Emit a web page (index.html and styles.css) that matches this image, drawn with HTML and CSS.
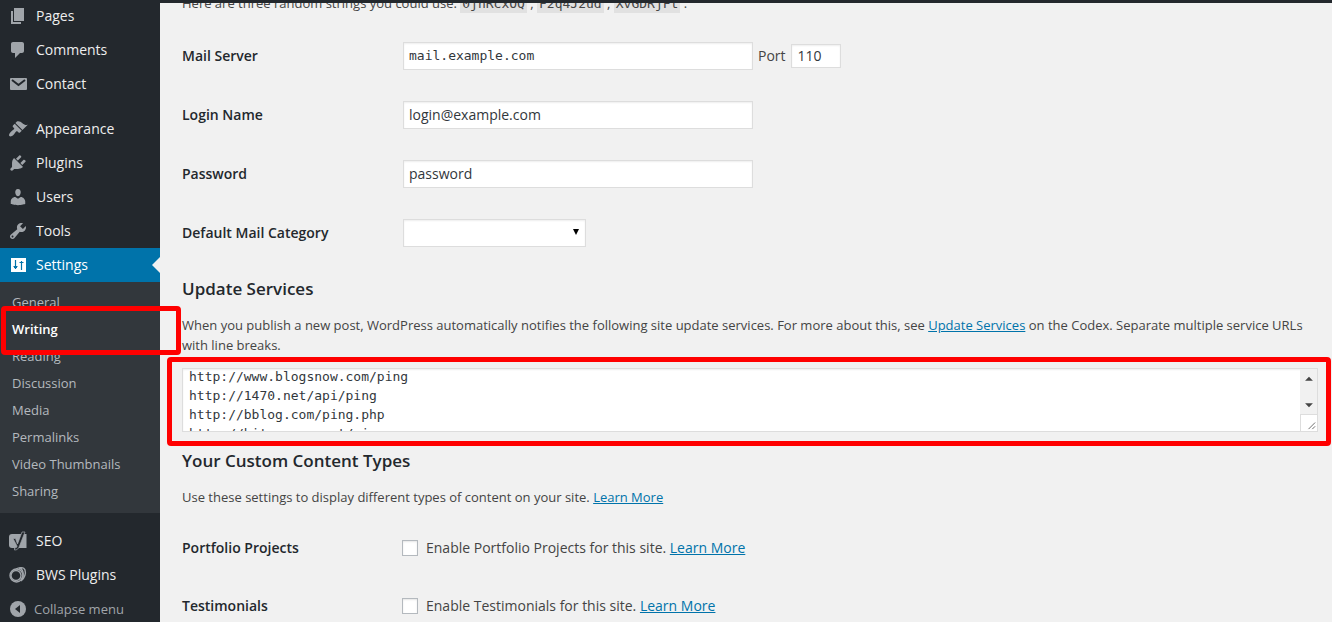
FILE: index.html
```
<!DOCTYPE html>
<html lang="en">
<head>
    <meta charset="UTF-8">
    <meta name="viewport" content="width=device-width, initial-scale=1.0">
    <title>Writing Settings</title>
    <link rel="stylesheet" href="styles.css">
</head>
<body>
    <div class="adminbar"></div>
    <div class="wrap">
        <nav class="sidebar">
            <ul class="menu">
                <li><a href="#"><svg viewBox="0 0 20 20"><path d="M6 15V2h10v13H6zm-1 1h8v2H3V5h2v11z"/></svg>Pages</a></li>
                <li><a href="#"><svg viewBox="0 0 20 20"><path d="M5 2h9c1.100 0 2 .9 2 2v7c0 1.100-.9 2-2 2h-2l-5 5v-5H5c-1.100 0-2-.9-2-2V4c0-1.100.9-2 2-2z"/></svg>Comments</a></li>
                <li><a href="#"><svg viewBox="0 0 20 20"><rect x="2" y="4" width="17" height="12" rx="1"/><path class="cut" d="M4 6l6.500 5L17 6"/></svg>Contact</a></li>
            </ul>
            <ul class="menu">
                <li><a href="#"><svg viewBox="0 0 20 20"><path d="M14.480 11.060L7.410 3.990l1.500-1.500c.5-.56 2.300-.47 3.510.32 1.210.8 1.430 1.280 2.910 2.100 1.180.64 2.450 1.260 4.450.85zm-.71.71L6.700 4.700 4.930 6.470c-.39.39-.39 1.020 0 1.410l1.060 1.060c.39.39.39 1.030 0 1.420-.6.6-1.430 1.110-2.210 1.690-.35.26-.7.53-1.010.84C1.430 14.230.4 16.080 1.400 17.070c.99 1 2.840-.03 4.180-1.360.31-.31.58-.66.85-1.020.57-.78 1.080-1.610 1.690-2.210.39-.39 1.020-.39 1.410 0l1.060 1.060c.39.39 1.020.39 1.410 0z"/></svg>Appearance</a></li>
                <li><a href="#"><svg viewBox="0 0 20 20"><path d="M13.110 4.360L9.870 7.600 8 5.730l3.240-3.240c.35-.34 1.050-.2 1.560.32.52.51.66 1.210.31 1.550zm-8 1.770l.91-1.120 9.010 9.010-1.190.84c-.71.71-2.630 1.160-3.820 1.160H6.140L4.900 17.260c-.59.59-1.540.59-2.120 0-.59-.58-.59-1.530 0-2.120l1.240-1.240v-3.880c0-1.130.4-3.190 1.090-3.890zm7.260 3.970l3.240-3.240c.34-.35 1.040-.21 1.550.31.52.51.66 1.210.31 1.550l-3.240 3.250z"/></svg>Plugins</a></li>
                <li><a href="#"><svg viewBox="0 0 20 20"><path d="M10 9.250c-2.270 0-2.730-3.440-2.730-3.440C7 4.020 7.820 2 9.970 2c2.160 0 2.980 2.020 2.710 3.810 0 0-.41 3.440-2.680 3.440zm0 2.570L12.720 10c2.390 0 4.520 2.330 4.520 4.530v2.490s-3.650 1.130-7.240 1.130c-3.650 0-7.240-1.130-7.240-1.130v-2.490c0-2.250 1.940-4.480 4.470-4.480z"/></svg>Users</a></li>
                <li><a href="#"><svg viewBox="0 0 20 20"><path d="M16.680 9.770c-1.340 1.340-3.300 1.670-4.950.99l-5.410 6.520c-.99.99-2.590.99-3.580 0s-.99-2.590 0-3.570l6.520-5.420c-.68-1.650-.35-3.610.99-4.950 1.280-1.280 3.120-1.620 4.720-1.060l-2.890 2.890 2.820 2.820 2.860-2.870c.53 1.580.18 3.390-1.080 4.650zM3.810 16.210c.4.39 1.040.39 1.430 0 .4-.4.4-1.040 0-1.430-.39-.4-1.030-.4-1.430 0-.39.39-.39 1.030 0 1.430z"/></svg>Tools</a></li>
                <li class="current">
                    <a href="#"><svg viewBox="0 0 20 20"><rect x="3" y="3" width="15" height="14"/><path class="knobs" d="M7.500 5v9M5.500 11.500h4M6 12.500h3M13.500 6v9M11.500 7.500h4"/></svg>Settings</a>
                    <ul class="submenu">
                        <li><a href="#">General</a></li>
                        <li class="active"><a href="#">Writing</a></li>
                        <li><a href="#">Reading</a></li>
                        <li><a href="#">Discussion</a></li>
                        <li><a href="#">Media</a></li>
                        <li><a href="#">Permalinks</a></li>
                        <li><a href="#">Video Thumbnails</a></li>
                        <li><a href="#">Sharing</a></li>
                    </ul>
                </li>
            </ul>
            <ul class="menu">
                <li><a href="#"><svg viewBox="0 0 20 20"><path d="M4 3h14.500v14H4c-2 0-3-1-3-3V6c0-2 1-3 3-3z"/><path class="edge" d="M5 7.500h2.500l2 5.500L14 1h3l-5.500 14c-1 3-2.500 4-5 4v-2c2 0 2.500-1 2.500-2z"/></svg>SEO</a></li>
                <li><a href="#"><svg viewBox="0 0 20 20"><g class="rings"><circle cx="8" cy="10.500" r="5"/><circle cx="8.500" cy="10.500" r="6.500"/><path d="M8 4c3-2 8-2 9 1s0 8-4 11M11 3c4 1 6 6 2 12"/></g></svg>BWS Plugins</a></li>
            </ul>
            <button type="button" class="collapse"><svg viewBox="0 0 20 20"><circle cx="10" cy="10" r="8"/><path class="arrow" d="M12 6v8l-5-4z"/></svg>Collapse menu</button>
        </nav>
        <main class="content">
            <p class="strings">Here are three random strings you could use: <code>0jnRcxOQ</code> , <code>F2q4J2ud</code> , <code>XvGDRjFt</code> .</p>
            <div class="row">
                <label class="title" for="server">Mail Server</label>
                <div class="field">
                    <input class="text mono" id="server" type="text" value="mail.example.com">
                    <label for="port">Port</label>
                    <input class="port" id="port" type="text" value="110">
                </div>
            </div>
            <div class="row">
                <label class="title" for="login">Login Name</label>
                <input class="text" id="login" type="text" value="login@example.com">
            </div>
            <div class="row">
                <label class="title" for="pass">Password</label>
                <input class="text" id="pass" type="text" value="password">
            </div>
            <div class="row">
                <label class="title" for="category">Default Mail Category</label>
                <div class="select">
                    <select id="category"><option></option></select>
                    <svg viewBox="0 0 8 7"><path d="M1 0h6L4 6z"/></svg>
                </div>
            </div>
            <h3><label for="ping">Update Services</label></h3>
            <p>When you publish a new post, WordPress automatically notifies the following site update services. For more about this, see <a href="#">Update Services</a> on the Codex. Separate multiple service URLs with line breaks.</p>
            <div class="services">
                <textarea id="ping" rows="3">http://www.blogsnow.com/ping
http://1470.net/api/ping
http://bblog.com/ping.php
http://bitacoras.net/ping</textarea>
                <div class="scroll">
                    <svg viewBox="0 0 17 46"><path d="M5 12h8L9 8zM5 35h8l-4 4z"/></svg>
                    <svg class="grip" viewBox="0 0 17 17"><path d="M8 15l7-7M12 15l3-3"/></svg>
                </div>
            </div>
            <h3>Your Custom Content Types</h3>
            <p>Use these settings to display different types of content on your site. <a href="#">Learn More</a></p>
            <div class="types">
                <div class="row">
                    <span class="title">Portfolio Projects</span>
                    <div class="check">
                        <input id="portfolio" type="checkbox">
                        <label for="portfolio">Enable Portfolio Projects for this site. <a href="#">Learn More</a></label>
                    </div>
                </div>
                <div class="row">
                    <span class="title">Testimonials</span>
                    <div class="check">
                        <input id="testimonials" type="checkbox">
                        <label for="testimonials">Enable Testimonials for this site. <a href="#">Learn More</a></label>
                    </div>
                </div>
            </div>
        </main>
    </div>
</body>
</html>
```
FILE: styles.css
```
* {
    box-sizing: border-box;
}
body {
    margin: 0;
    height: 100vh;
    overflow: hidden;
    background: #f1f1f1;
    color: #444;
    font-family: 'Open Sans', sans-serif;
    font-size: 13px;
    line-height: 20px;
}
.adminbar {
    position: fixed;
    top: 0;
    left: 0;
    right: 0;
    height: 3px;
    background: #23282d;
    z-index: 5;
}
.wrap {
    display: flex;
    min-height: 100vh;
}
ul {
    list-style: none;
    margin: 0;
    padding: 0;
}
/* left menu */
.sidebar {
    width: 160px;
    flex-shrink: 0;
    background: #23282d;
    margin-top: -1px;
}
.menu {
    margin-bottom: 11px;
}
.menu:last-of-type {
    margin-bottom: 0;
}
.menu > li > a, .collapse {
    display: flex;
    align-items: center;
    gap: 8px;
    height: 34px;
    padding: 0 8px;
    color: #eee;
    font-size: 14px;
    text-decoration: none;
}
.sidebar svg {
    width: 20px;
    height: 20px;
    fill: #a0a5aa;
}
.sidebar .cut {
    fill: none;
    stroke: #23282d;
    stroke-width: 2;
}
.sidebar .edge {
    fill: #23282d;
    stroke: #a0a5aa;
    stroke-width: .7;
}
.sidebar .rings {
    fill: none;
    stroke: #a0a5aa;
    stroke-width: 1.4;
}
.sidebar .arrow {
    fill: #23282d;
}
.menu > .current > a {
    position: relative;
    background: #0073aa;
    color: #fff;
}
.current > a svg {
    fill: #fff;
}
.current .knobs {
    fill: none;
    stroke: #0073aa;
    stroke-width: 1.2;
}
.menu > .current > a::after {
    content: "";
    position: absolute;
    right: 0;
    border: 8px solid transparent;
    border-right-color: #f1f1f1;
    border-left: 0;
}
.submenu {
    background: #32373c;
    padding: 7px 0 8px;
}
.submenu li {
    position: relative;
}
.submenu a {
    display: block;
    padding: 0 12px;
    line-height: 27px;
    color: #b4b9be;
    text-decoration: none;
}
.submenu .active a {
    color: #fff;
    font-weight: 600;
}
.submenu .active::after {
    content: "";
    position: absolute;
    z-index: 3;
    top: -10px;
    bottom: -12px;
    left: 1px;
    right: -21px;
    border: 5px solid #f00;
    border-radius: 4px;
}
.collapse {
    width: 100%;
    gap: 6px;
    border: 0;
    background: none;
    color: #a0a5aa;
    font-family: inherit;
    font-size: 13px;
}
/* settings form */
.content {
    flex: 1;
    padding: 0 14px 0 22px;
    margin-top: -7px;
}
p {
    margin: 0;
}
a {
    color: #0073aa;
}
code, .mono, textarea {
    font-family: 'DejaVu Sans Mono', monospace;
}
code {
    font-size: 13px;
    padding: 3px 2px 2px;
    background: #e1e1e1;
}
.strings {
    margin-bottom: 12px;
}
.row {
    display: flex;
    align-items: center;
    height: 59px;
    font-size: 14px;
}
.title {
    width: 221px;
    color: #23282d;
    font-weight: 600;
}
.field {
    display: flex;
    align-items: center;
    gap: 5px;
}
input, select, textarea {
    margin: 0;
    color: #32373c;
    font-family: inherit;
    font-size: 14px;
}
.text, .port, select {
    height: 28px;
    padding: 0 5px;
    border: 1px solid #ddd;
    background: #fff;
    box-shadow: inset 0 1px 2px rgba(0, 0, 0, .07);
}
.text {
    width: 350px;
}
.text.mono {
    font-family: 'DejaVu Sans Mono', monospace;
    font-size: 13px;
}
.port {
    width: 50px;
    height: 24px;
    padding: 0 6px;
}
.select {
    position: relative;
}
select {
    display: block;
    width: 183px;
    border-radius: 0;
    appearance: none;
}
.select svg {
    position: absolute;
    top: 10px;
    right: 6px;
    width: 8px;
    height: 7px;
    fill: #000;
}
h3 {
    margin: 17px 0 16px;
    color: #23282d;
    font-size: 17px;
    font-weight: 600;
}
.services {
    position: relative;
    display: flex;
    height: 64px;
    margin: 13px 0 19px;
    border: 1px solid #ddd;
    background: #fff;
    box-shadow: inset 0 1px 2px rgba(0, 0, 0, .07);
}
.services::after {
    content: "";
    position: absolute;
    inset: -12px -14px -15px -16px;
    border: 5px solid #f00;
    border-radius: 4px;
    pointer-events: none;
}
textarea {
    flex: 1;
    margin-top: -2px;
    padding: 0 6px;
    border: 0;
    background: transparent;
    font-family: 'DejaVu Sans Mono', monospace;
    font-size: 13px;
    line-height: 19px;
    overflow: hidden;
    resize: none;
}
.scroll {
    display: flex;
    flex-direction: column;
    width: 17px;
}
.scroll svg {
    flex: 1;
    background: #f1f1f1;
    fill: #444;
}
.scroll .grip {
    flex: none;
    height: 17px;
    border: 1px solid #ddd;
    border-width: 1px 0 0 1px;
    background: #fff;
    fill: none;
    stroke: #666;
}
.types {
    margin-top: 12px;
}
.types .row {
    height: 58px;
}
.types .title {
    width: 220px;
}
.check {
    display: flex;
    align-items: center;
    gap: 8px;
}
.check input {
    appearance: none;
    width: 16px;
    height: 16px;
    border: 1px solid #b4b9be;
    background: #fff;
    box-shadow: inset 0 1px 2px rgba(0, 0, 0, .1);
}
```
